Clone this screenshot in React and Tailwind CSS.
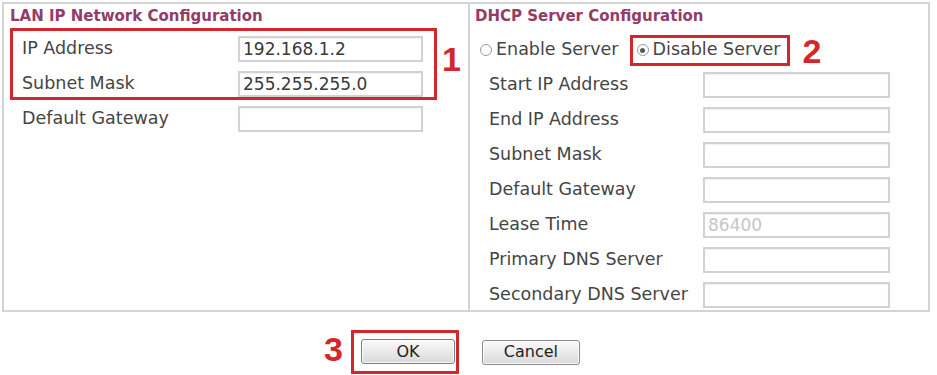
import React from "react";

const font = { fontFamily: '"DejaVu Sans", Verdana, sans-serif' };

function Field({ label, value, muted, labelW, inputW }) {
  return (
    <div className="flex items-center h-[26px]">
      <span className={`${labelW} text-[17.5px] text-[#454545] leading-none`}>{label}</span>
      <div
        className={`${inputW} h-[26px] border-2 border-[#d2d2d2] bg-white flex items-center pl-[3px] text-[17px] leading-none shadow-[inset_0_1px_1px_rgba(0,0,0,0.06)] ${
          muted ? "text-[#c6c6c6]" : "text-[#3a3a3a]"
        }`}
      >
        {value}
      </div>
    </div>
  );
}

function Radio({ checked }) {
  return (
    <span className="w-[12px] h-[12px] rounded-full border border-[#9a9a9a] bg-white flex items-center justify-center shrink-0">
      {checked && <span className="w-[5px] h-[5px] rounded-full bg-[#4f5f4f]" />}
    </span>
  );
}

function Marker({ n, className = "" }) {
  return (
    <span
      className={`text-[34px] font-bold leading-none text-[#d6262b] ${className}`}
      style={{ fontFamily: '"Liberation Sans", Arial, sans-serif' }}
    >
      {n}
    </span>
  );
}

export default function App() {
  const dhcpRows = [
    ["Start IP Address", ""],
    ["End IP Address", ""],
    ["Subnet Mask", ""],
    ["Default Gateway", ""],
    ["Lease Time", "86400", true],
    ["Primary DNS Server", ""],
    ["Secondary DNS Server", ""],
  ];

  return (
    <div className="w-[937px] h-[375px] bg-white overflow-hidden pt-[2px] pl-[2px]" style={font}>
      {/* config frame */}
      <div className="w-[928px] h-[310px] border-2 border-[#d4d4d4] flex">
        {/* LAN panel */}
        <div className="w-[466px] border-r-2 border-[#d4d4d4] pl-[6px]">
          <div className="h-[24px] flex items-center text-[15px] font-bold text-[#943c68]">
            LAN IP Network Configuration
          </div>
          <div className="flex items-center">
            <div className="w-[427px] border-[3px] border-[#d2282d] pl-[9px] pt-[5px] flex flex-col gap-[9px]">
              <Field label="IP Address" value="192.168.1.2" labelW="w-[216px]" inputW="w-[185px]" />
              <Field label="Subnet Mask" value="255.255.255.0" labelW="w-[216px]" inputW="w-[185px]" />
            </div>
            <Marker n="1" className="ml-[5px] mt-[-10px]" />
          </div>
          <div className="mt-[6px] pl-[12px]">
            <Field label="Default Gateway" value="" labelW="w-[216px]" inputW="w-[185px]" />
          </div>
        </div>

        {/* DHCP panel */}
        <div className="flex-1">
          <div className="h-[24px] flex items-center pl-[5px] text-[15px] font-bold text-[#943c68]">
            DHCP Server Configuration
          </div>
          <div className="mt-[4px] flex items-center pl-[10px] text-[17.5px] text-[#454545]">
            <Radio />
            <span className="ml-[4px] leading-none">Enable Server</span>
            <div className="ml-[11px] h-[31px] border-[3px] border-[#d2282d] pl-[4px] pr-[7px] flex items-center">
              <Radio checked />
              <span className="ml-[4px] leading-none">Disable Server</span>
            </div>
            <Marker n="2" className="ml-[12px] mt-[2px]" />
          </div>
          <div className="mt-[4px] pl-[19px] flex flex-col gap-[9px]">
            {dhcpRows.map(([label, value, muted]) => (
              <Field
                key={label}
                label={label}
                value={value}
                muted={muted}
                labelW="w-[214px]"
                inputW="w-[187px]"
              />
            ))}
          </div>
        </div>
      </div>

      {/* buttons */}
      <div className="mt-[18px] pl-[322px] flex items-center">
        <Marker n="3" className="mt-[-6px]" />
        <div className="ml-[8px] border-[3px] border-[#d2282d] pl-[7px] pr-[1px] pt-[6px] pb-[7px]">
          <button className="w-[94px] h-[25px] rounded-[3px] border border-[#6f8191] bg-gradient-to-b from-[#fbfbfb] to-[#d9d9d9] text-[16px] text-[#222] leading-none shadow-[inset_0_0_0_1px_rgba(255,255,255,0.8)]">
            OK
          </button>
        </div>
        <button className="ml-[23px] w-[98px] h-[25px] rounded-[3px] border border-[#8a8a8a] bg-gradient-to-b from-[#fbfbfb] to-[#d9d9d9] text-[16px] text-[#222] leading-none shadow-[inset_0_0_0_1px_rgba(255,255,255,0.8)]">
          Cancel
        </button>
      </div>
    </div>
  );
}
